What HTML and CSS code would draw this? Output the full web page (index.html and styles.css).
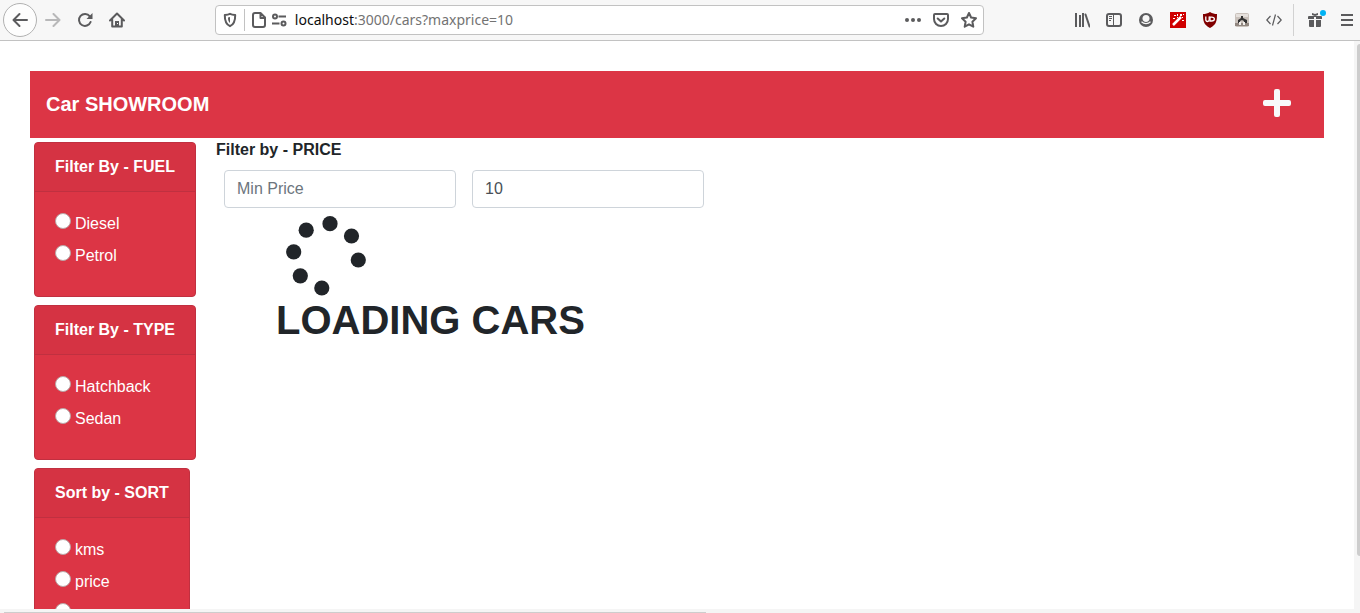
FILE: index.html
```html
<!DOCTYPE html>
<html lang="en">
<head>
<meta charset="utf-8">
<title>Car Showroom</title>
<link rel="stylesheet" href="styles.css">
</head>
<body>
<div class="browser">
  <header class="toolbar">
    <button class="tool tool-back" aria-label="Back"><svg class="icon" viewBox="0 0 16 16"><path class="line" d="M15 8H2M7.500 2 1.500 8l6 6"/></svg></button>
    <button class="tool tool-dim" aria-label="Forward" disabled><svg class="icon" viewBox="0 0 16 16"><path class="line" d="M1 8h13M8.500 2l6 6-6 6"/></svg></button>
    <button class="tool" aria-label="Reload"><svg class="icon" viewBox="0 0 16 16"><path class="line" d="M12.800 4.300A6 6 0 1 0 13.600 10"/><path d="M15.500 1v6h-6z"/></svg></button>
    <button class="tool" aria-label="Home"><svg class="icon" viewBox="0 0 16 16"><path class="line" d="M1 8.500 8 1.500l7 7M3.200 7.500v7h9.600v-7"/><path d="M6 9h4v5H6z"/><path fill="#f9f9fa" d="M8 11h1v1H8z"/></svg></button>
    <div class="spacer"></div>
    <div class="urlbar">
      <button class="url-shield" aria-label="Tracking protection"><svg class="icon" viewBox="0 0 16 16"><path class="line" d="M8 1.800c2 .9 3.800 1 5.200 1.100C13.300 8 12.500 12 8 14.200 3.500 12 2.700 8 2.800 2.900 4.200 2.800 6 2.700 8 1.800z"/><path d="M8 5v6C6.500 10 6 8 6 5.500c.8-.1 1.400-.2 2-.5z"/></svg></button>
      <button class="url-info" aria-label="Site information"><svg class="icon" viewBox="0 0 16 16"><path class="line" d="M4 1h5.500L14 5.500V13a2 2 0 0 1-2 2H4a2 2 0 0 1-2-2V3a2 2 0 0 1 2-2zM9.500 1v5H14"/></svg></button>
      <button class="url-info" aria-label="Permissions"><svg class="icon" viewBox="0 0 16 16"><g fill="none" stroke="#5b5b5d" stroke-width="2"><circle cx="4" cy="4.500" r="2"/><circle cx="12.500" cy="11.500" r="2"/><path d="M7.500 4.500H15M1 11.500h7.500"/></g></svg></button>
      <div class="url-text" role="textbox" aria-label="Address" contenteditable="true" spellcheck="false"><span class="url-host">localhost</span>:3000/cars?maxprice=10</div>
      <button class="url-action" aria-label="Page actions"><svg class="icon" viewBox="0 0 16 16"><circle cx="2" cy="8" r="2"/><circle cx="8" cy="8" r="2"/><circle cx="14" cy="8" r="2"/></svg></button>
      <button class="url-action" aria-label="Save to Pocket"><svg class="icon" viewBox="0 0 16 16"><path class="line" d="M2 2h12a1 1 0 0 1 1 1v4A7 7 0 0 1 1 7V3a1 1 0 0 1 1-1zM4.700 6.500 8 9.500l3.300-3"/></svg></button>
      <button class="url-action" aria-label="Bookmark"><svg class="icon" viewBox="0 0 16 16"><path class="line" d="M8 1l2.100 4.500 4.900.7-3.600 3.500.9 5L8 12.300l-4.300 2.400.9-5L1 6.200l4.900-.7z"/></svg></button>
    </div>
    <div class="spacer"></div>
    <button class="tool" aria-label="Library"><svg class="icon" viewBox="0 0 16 16"><path d="M1 1h2v14H1zM5 3h2v12H5zM8 1h2v14H8z"/><path class="line" d="M11.500 2.500 15.500 14.500"/></svg></button>
    <button class="tool" aria-label="Sidebars"><svg class="icon" viewBox="0 0 16 16"><rect class="line" x="1" y="2" width="14" height="12" rx="2"/><path d="M7 2h1v12H7zM3 4h3v1H3zM3 6h3v1H3zM3 8h2v1H3z"/></svg></button>
    <button class="tool" aria-label="Account"><svg class="icon" viewBox="0 0 16 16"><circle cx="8" cy="8" r="7"/><path fill="#f7f7f7" d="M8 3a3.500 3.500 0 0 1 3.500 3.500C11.500 8.500 10 10 8 10S4.500 8.500 4.500 6.500A3.500 3.500 0 0 1 8 3z"/><path d="M3.500 9.800c2.500 2.300 6.500 2.300 9 0" stroke="#f7f7f7" stroke-width="1.200" fill="none"/></svg></button>
    <button class="tool" aria-label="Magic wand"><svg class="icon" viewBox="0 0 16 16"><path fill="#d00000" d="M0 0h16v16H0z"/><path d="M3 13l8-8" stroke="#fff" stroke-width="2.500"/><g fill="#fff"><path d="M4 3h2v1H4zM7 2h1v2H7zM3 6h2v1H3zM7 5h1v1H7zM10 2h2v2h-2zM12 5h1v1h-1zM12 8h2v1h-2zM13 2h1v1h-1z"/></g></svg></button>
    <button class="tool" aria-label="uBlock Origin"><svg class="icon" viewBox="0 0 16 16"><path fill="#800000" d="M8 0c2.500 1.500 4.500 2 7 2 0 7-.5 10.500-7 14C1.500 12.500 1 9 1 2c2.500 0 4.500-.5 7-2z"/><g fill="none" stroke="#fff" stroke-width="1.300"><path d="M3.800 4.500v3.300a1.700 1.700 0 0 0 3.400 0V4.500"/><path d="M8 5.100h1.500c3.800 0 3.800 3.900 0 3.900H8V4.500"/></g></svg></button>
    <button class="tool" aria-label="Extension"><svg class="icon" viewBox="0 0 16 16"><rect x="1" y="1" width="14" height="14" rx="2" fill="#c9c1bb"/><path fill="#918780" d="M1 11h14v3H1z"/><path fill="#e5e0dc" d="M2 2h12v3H2z"/><path fill="#333" d="M7 4h2v2l2 1 2 1v3h-3V9L8 8 6 9v2H4V8l3-2z"/><path fill="#f2efec" d="M5 10h2v3H5zM9 10h2v3H9z"/></svg></button>
    <button class="tool" aria-label="Developer tools"><svg class="icon" viewBox="0 0 16 16"><path fill="none" stroke="#5b5b5d" stroke-width="1.200" d="M4.500 4 .8 8l3.700 4M11.500 4l3.700 4-3.700 4M9.500 2.500l-3 11"/></svg></button>
    <div class="tool-divider"></div>
    <button class="tool tool-gift" aria-label="What's new"><svg class="icon" viewBox="0 0 16 16"><path d="M2 4h12a1 1 0 0 1 1 1v2H9V5H7v2H1V5a1 1 0 0 1 1-1zM2 8h5v7H3a1 1 0 0 1-1-1zM9 8h5v6a1 1 0 0 1-1 1H9zM5 1l3 1 3-1v2L8 4 5 3z"/></svg><span class="dot"></span></button>
    <button class="tool tool-menu" aria-label="Menu"><svg class="icon" viewBox="0 0 16 16"><path d="M2 2h12v2H2zM2 7h12v2H2zM2 12h12v2H2z"/></svg></button>
  </header>

  <div class="viewport">
    <div class="page">
      <nav class="navbar">
        <a class="brand" href="#">Car SHOWROOM</a>
        <button class="add" aria-label="Add car"><svg viewBox="0 0 28 28"><path d="M13 0h2a2 2 0 0 1 2 2v9h9a2 2 0 0 1 2 2v2a2 2 0 0 1-2 2h-9v9a2 2 0 0 1-2 2h-2a2 2 0 0 1-2-2v-9H2a2 2 0 0 1-2-2v-2a2 2 0 0 1 2-2h9V2a2 2 0 0 1 2-2z"/></svg></button>
      </nav>
      <div class="content">
        <aside class="sidebar">
          <section class="card">
            <h2 class="card-header">Filter By - FUEL</h2>
            <div class="card-body">
              <label class="option"><input class="radio" type="radio" name="fuel"><span>Diesel</span></label>
              <label class="option"><input class="radio" type="radio" name="fuel"><span>Petrol</span></label>
            </div>
          </section>
          <section class="card">
            <h2 class="card-header">Filter By - TYPE</h2>
            <div class="card-body">
              <label class="option"><input class="radio" type="radio" name="type"><span>Hatchback</span></label>
              <label class="option"><input class="radio" type="radio" name="type"><span>Sedan</span></label>
            </div>
          </section>
          <section class="card">
            <h2 class="card-header">Sort by - SORT</h2>
            <div class="card-body">
              <label class="option"><input class="radio" type="radio" name="sort"><span>kms</span></label>
              <label class="option"><input class="radio" type="radio" name="sort"><span>price</span></label>
              <div class="option"><input class="radio" type="radio" name="sort" aria-label="Third sort option"></div>
            </div>
          </section>
        </aside>
        <main class="main">
          <h2 class="price-title">Filter by - PRICE</h2>
          <div class="price-row">
            <input class="field" type="text" placeholder="Min Price" aria-label="Min Price">
            <input class="field" type="text" value="10" aria-label="Max Price">
          </div>
          <div class="loading">
            <svg class="spinner" viewBox="0 0 80 80"><circle cx="44" cy="7.700" r="7.600"/><circle cx="65.500" cy="20" r="7.600"/><circle cx="72.300" cy="44" r="7.600"/><circle cx="35.800" cy="72" r="7.600"/><circle cx="14.300" cy="59.800" r="7.600"/><circle cx="7.700" cy="35.800" r="7.600"/><circle cx="20.200" cy="14.200" r="7.600"/></svg>
            <h1 class="loading-title">LOADING CARS</h1>
          </div>
        </main>
      </div>
    </div>
    <div class="scroll-v"><div class="thumb-v"></div></div>
    <div class="scroll-h"><div class="thumb-h"></div></div>
  </div>
</div>
</body>
</html>
```
FILE: styles.css
```css
*, *::before, *::after { box-sizing: border-box; }

body {
  margin: 0;
  color: #212529;
  background: #fff;
  font: 16px/24px "Liberation Sans", Arial, sans-serif;
}

h1, h2 { margin: 0; }
button { padding: 0; border: 0; background: none; font: inherit; }

.browser {
  display: flex;
  flex-direction: column;
  height: 100vh;
  overflow: hidden;
}

/* Browser toolbar */
.toolbar {
  display: flex;
  align-items: center;
  padding: 4px 0 4px 4px;
  background: #f7f7f7;
  border-bottom: 1px solid #c2c2c2;
}
.icon { display: block; width: 16px; height: 16px; fill: #5b5b5d; }
.line { fill: none; stroke: #5b5b5d; stroke-width: 2; stroke-linecap: round; stroke-linejoin: round; }
.tool {
  display: flex;
  flex: none;
  align-items: center;
  justify-content: center;
  width: 32px;
  height: 32px;
}
.tool-back {
  width: 34px;
  height: 34px;
  margin: -1px 0 -1px -1px;
  border: 1px solid #b1b1b1;
  border-radius: 50%;
  background: #fdfdfd;
}
.tool-dim { opacity: 0.4; }
.tool-divider { width: 1px; height: 32px; margin: 0 5px 0 3px; background: #d2d2d2; }
.tool-gift { position: relative; }
.tool-menu { width: 29px; justify-content: flex-end; padding-right: 5px; }
.dot {
  position: absolute;
  top: 6px;
  right: 5px;
  width: 6px;
  height: 6px;
  border-radius: 50%;
  background: #00b3f4;
}
.spacer { flex: 82 1 0; }

.urlbar {
  display: flex;
  flex: 769 1 0;
  align-items: center;
  height: 30px;
  border: 1px solid #c2c2c2;
  border-radius: 4px;
  background: #fff;
}
.url-shield, .url-action { display: flex; flex: none; justify-content: center; width: 28px; }
.url-shield { width: 29px; padding: 3px 0; margin-right: 4px; border-right: 1px solid #c2c2c2; }
.url-info { display: flex; flex: none; justify-content: center; width: 20px; }
.url-text {
  flex: 1;
  margin-left: 6px;
  color: #737373;
  font: 14px/20px "Noto Sans", sans-serif;
  white-space: nowrap;
}
.url-host { color: #0c0c0d; }

/* Page area with its scrollbars */
.viewport {
  display: grid;
  flex: 1;
  grid-template: minmax(0, 1fr) 4px / minmax(0, 1fr) 6px;
  min-height: 0;
}
.page { overflow: hidden; padding: 30px 30px 0; }
.scroll-v { grid-row: 1 / 3; grid-column: 2; padding: 3px 0 0 3px; background: #f5f5f5; }
.thumb-v { height: 90%; border-radius: 3px 0 0 3px; background: #cdcdcd; }
.scroll-h { grid-row: 2; grid-column: 1; padding: 3px 0 0 4px; background: #f5f5f5; }
.thumb-h { width: 52%; height: 1px; background: #cdcdcd; }

.navbar {
  display: flex;
  align-items: center;
  justify-content: space-between;
  padding: 16px 20px 16px 16px;
  background: #dc3545;
}
.brand { color: #fff; font-size: 20px; font-weight: 700; line-height: 35px; text-decoration: none; }
.add { padding: 0 13px 4px; }
.add svg { display: block; width: 28px; height: 28px; fill: #f8f9fa; }

.content { display: flex; align-items: flex-start; gap: 20px; }
.sidebar {
  display: flex;
  flex-direction: column;
  align-items: flex-start;
  gap: 8px;
  padding: 4px 0 0 4px;
}
.card {
  border: 1px solid #c03040;
  border-radius: 4px;
  background: #dc3545;
  color: #fff;
}
.card-header {
  padding: 12px 20px;
  border-bottom: 1px solid #c03040;
  border-radius: 3px 3px 0 0;
  background: #d53343;
  font-size: 16px;
  line-height: 24px;
  white-space: nowrap;
}
.card-body { padding: 20px; }
.option { display: flex; gap: 4px; min-height: 24px; margin-bottom: 8px; }
.radio {
  appearance: none;
  width: 16px;
  height: 16px;
  margin: 1px 0 0;
  border: 1px solid #b9a5a6;
  border-radius: 50%;
  background: #fff;
}

.main { flex: 1; }
.price-title { font-size: 16px; line-height: 24px; }
.price-row { display: flex; gap: 16px; padding: 8px; }
.field {
  width: 232px;
  height: 38px;
  padding: 6px 12px;
  border: 1px solid #ced4da;
  border-radius: 4px;
  color: #495057;
  background: #fff;
  font: inherit;
}
.field::placeholder { color: #6c757d; opacity: 1; }
.loading { padding-left: 60px; }
.spinner { display: block; width: 80px; height: 80px; margin-left: 10px; fill: #212529; }
.loading-title { font-size: 40px; line-height: 48px; }
```
